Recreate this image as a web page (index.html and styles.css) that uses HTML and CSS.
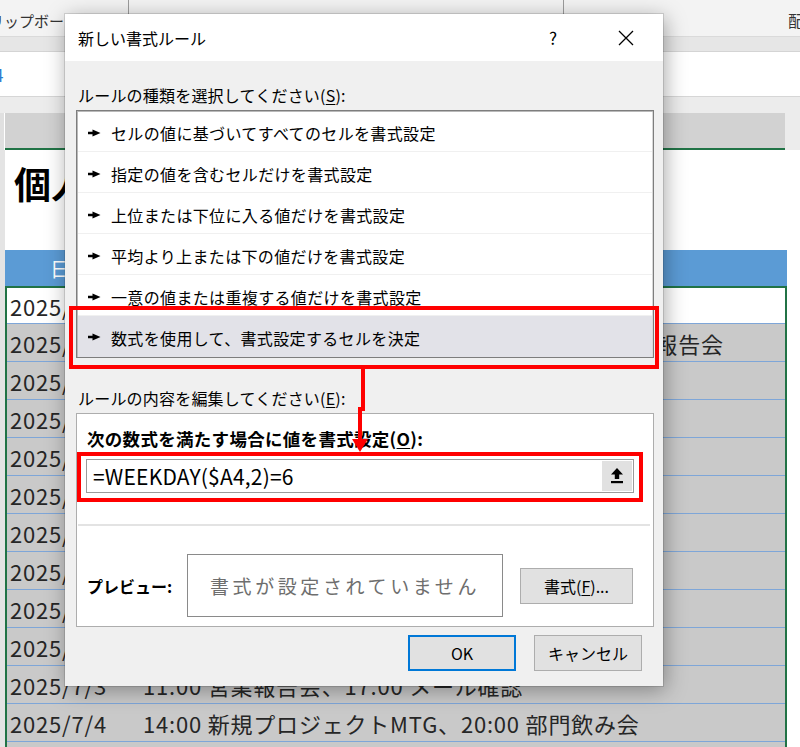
FILE: index.html
```html
<!DOCTYPE html>
<html lang="ja">
<head>
    <meta charset="UTF-8">
    <title>新しい書式ルール</title>
    <link rel="stylesheet" href="styles.css">
</head>
<body>
    <div class="sheet">
        <div class="ribbon">
            <span class="rb-left">リップボー</span>
            <span class="rb-right">配</span>
        </div>
        <div class="ribbon-band"></div>
        <div class="namebar"><span class="cellref">4</span></div>
        <div class="colhead">
            <div class="gutter"></div>
            <div class="colhead-cells"></div>
        </div>
        <div class="title-area">
            <h1>個人スケジュール</h1>
        </div>
        <div class="table">
            <div class="thead">
                <span class="c-date">日付</span>
                <span class="c-plan">予定</span>
            </div>
            <div class="rows">
                <div class="row first"><span class="c-date">2025/6/23</span><span class="c-plan">10:00 チーム定例</span></div>
                <div class="row"><span class="c-date">2025/6/24</span><span class="c-plan">10:00 定例会議、13:00 クライアント訪問、17:00 報告会</span></div>
                <div class="row"><span class="c-date">2025/6/25</span><span class="c-plan">09:30 朝会</span></div>
                <div class="row"><span class="c-date">2025/6/26</span><span class="c-plan">15:00 1on1</span></div>
                <div class="row"><span class="c-date">2025/6/27</span><span class="c-plan">19:00 ジム</span></div>
                <div class="row"><span class="c-date">2025/6/28</span><span class="c-plan">11:00 買い物</span></div>
                <div class="row"><span class="c-date">2025/6/29</span><span class="c-plan">終日 休み</span></div>
                <div class="row"><span class="c-date">2025/6/30</span><span class="c-plan">10:00 月初準備</span></div>
                <div class="row"><span class="c-date">2025/7/1</span><span class="c-plan">13:00 企画会議</span></div>
                <div class="row"><span class="c-date">2025/7/2</span><span class="c-plan">16:00 資料作成</span></div>
                <div class="row"><span class="c-date">2025/7/3</span><span class="c-plan">11:00 営業報告会、17:00 メール確認</span></div>
                <div class="row"><span class="c-date">2025/7/4</span><span class="c-plan">14:00 新規プロジェクトMTG、20:00 部門飲み会</span></div>
                <div class="row"><span class="c-date">2025/7/5</span><span class="c-plan">10:00 散歩</span></div>
            </div>
        </div>
    </div>

    <div class="dialog">
        <div class="titlebar">
            <span class="title">新しい書式ルール</span>
            <span class="help">?</span>
            <span class="close">
                <svg width="16" height="16" viewBox="0 0 16 16" fill="none" stroke="#000" stroke-width="1.3">
                    <path d="M1 1L15 15M15 1L1 15"/>
                </svg>
            </span>
        </div>
        <div class="dlg-body">
            <div class="dlg-label">ルールの種類を選択してください(<u>S</u>):</div>
            <ul class="rule-list">
                <li><svg class="marker" width="13" height="8" viewBox="0 0 13 8"><path d="M0 2.7H4.5V0.6L12.5 4L4.5 7.4V5.3H0Z" fill="#000"/></svg>セルの値に基づいてすべてのセルを書式設定</li>
                <li><svg class="marker" width="13" height="8" viewBox="0 0 13 8"><path d="M0 2.7H4.5V0.6L12.5 4L4.5 7.4V5.3H0Z" fill="#000"/></svg>指定の値を含むセルだけを書式設定</li>
                <li><svg class="marker" width="13" height="8" viewBox="0 0 13 8"><path d="M0 2.7H4.5V0.6L12.5 4L4.5 7.4V5.3H0Z" fill="#000"/></svg>上位または下位に入る値だけを書式設定</li>
                <li><svg class="marker" width="13" height="8" viewBox="0 0 13 8"><path d="M0 2.7H4.5V0.6L12.5 4L4.5 7.4V5.3H0Z" fill="#000"/></svg>平均より上または下の値だけを書式設定</li>
                <li><svg class="marker" width="13" height="8" viewBox="0 0 13 8"><path d="M0 2.7H4.5V0.6L12.5 4L4.5 7.4V5.3H0Z" fill="#000"/></svg>一意の値または重複する値だけを書式設定</li>
                <li class="selected"><svg class="marker" width="13" height="8" viewBox="0 0 13 8"><path d="M0 2.7H4.5V0.6L12.5 4L4.5 7.4V5.3H0Z" fill="#000"/></svg>数式を使用して、書式設定するセルを決定</li>
            </ul>
            <div class="dlg-label second">ルールの内容を編集してください(<u>E</u>):</div>
            <div class="edit-panel">
                <div class="panel-label">次の数式を満たす場合に値を書式設定(<u>O</u>):</div>
                <div class="formula-input">
                    <span class="formula">=WEEKDAY($A4,2)=6</span>
                    <span class="ref-btn">
                        <svg width="12" height="16" viewBox="0 0 12 16">
                            <path d="M6 0L12 6.5H8.2V11H3.8V6.5H0Z" fill="#000"/>
                            <rect x="0" y="13" width="12" height="2.2" fill="#000"/>
                        </svg>
                    </span>
                </div>
                <div class="panel-sep"></div>
                <div class="preview-row">
                    <span class="preview-label">プレビュー:</span>
                    <div class="preview-box">書式が設定されていません</div>
                    <span class="btn fmt-btn">書式(<u>F</u>)...</span>
                </div>
            </div>
            <div class="dlg-buttons">
                <span class="btn ok">OK</span>
                <span class="btn">キャンセル</span>
            </div>
        </div>

        <!-- 注釈（赤枠と矢印） -->
        <div class="mark mark-list"></div>
        <div class="mark mark-formula"></div>
        <svg class="mark-arrow" width="20" height="90" viewBox="0 0 20 90">
            <path d="M12 0V41H9V74" fill="none" stroke="#f00" stroke-width="4"/>
            <path d="M1 71H17L9 84Z" fill="#f00"/>
        </svg>
    </div>
</body>
</html>
```

FILE: styles.css
```css
* {
    margin: 0;
    padding: 0;
    box-sizing: border-box;
}

body {
    width: 800px;
    height: 747px;
    overflow: hidden;
    position: relative;
    background: #fff;
    font-family: "Noto Sans CJK JP", "Noto Sans", sans-serif;
    font-size: 16px;
    color: #000;
}

/* 背景のシート */
.sheet {
    width: 800px;
}

.ribbon {
    height: 36px;
    display: flex;
    justify-content: space-between;
    align-items: center;
    padding-top: 4px;
    background:
        linear-gradient(#9c9c9c, #9c9c9c) 128px 0 / 1px 15px no-repeat,
        linear-gradient(#9c9c9c, #9c9c9c) 563px 0 / 1px 15px no-repeat,
        #f3f3f3;
    color: #333;
    white-space: nowrap;
    overflow: hidden;
}

.rb-left {
    font-size: 15px;
    margin-left: -11px;
}

.rb-right {
    font-size: 16px;
    margin-right: -4px;
}

.ribbon-band {
    height: 16px;
    background: #e6e6e6;
    border-top: 1px solid #dadada;
    border-bottom: 1px solid #d4d4d4;
}

.namebar {
    height: 45px;
    background: #fff;
    border-bottom: 1px solid #d6d6d6;
    display: flex;
    align-items: center;
    overflow: hidden;
}

.cellref {
    color: #2b7bd0;
    font-size: 17px;
    margin-left: -6px;
}

.colhead {
    height: 53px;
    display: flex;
    align-items: flex-end;
    background: #ececec;
    padding-top: 16px;
}

.colhead .gutter {
    width: 5px;
    height: 37px;
    background: #e0e0e0;
    border-right: 1px solid #fff;
}

.colhead-cells {
    width: 780px;
    height: 37px;
    background: #d2d2d2;
    border-bottom: 2px solid #217346;
}

.title-area {
    height: 100px;
    padding: 11px 0 0 14px;
    background:
        linear-gradient(#e4e4e4, #e4e4e4) 0 0 / 5px 100% no-repeat,
        #fff;
}

.title-area h1 {
    font-size: 37px;
    line-height: 44px;
    font-weight: 700;
    white-space: nowrap;
}

.table {
    width: 787px;
    padding-left: 5px;
    background: linear-gradient(#e4e4e4, #e4e4e4) 0 0 / 5px 100% no-repeat;
}

.thead {
    height: 36px;
    background: #5b9bd5;
    color: #fff;
    display: flex;
    align-items: center;
    font-size: 20px;
}

.thead .c-date {
    width: 131px;
    padding-left: 45px;
}

.rows {
    border: 2px solid #217346;
    border-bottom: none;
}

.row {
    height: 38px;
    display: flex;
    align-items: center;
    background: #c9c9c9;
    border-bottom: 1px solid #7ea6d8;
    font-size: 22px;
    color: #262626;
    white-space: nowrap;
}

.row.first {
    background: #fff;
    height: 36px;
}

.c-date {
    width: 136px;
    padding-left: 3px;
    letter-spacing: 0.8px;
}

.c-plan {
    letter-spacing: 0.8px;
}

/* ダイアログ */
.dialog {
    position: absolute;
    left: 65px;
    top: 14px;
    width: 598px;
    height: 672px;
    background: #f0f0f0;
    box-shadow: 0 0 0 1px rgba(0, 0, 0, 0.12), 2px 4px 20px rgba(0, 0, 0, 0.35);
}

.titlebar {
    height: 47px;
    background: #fff;
    display: flex;
    align-items: center;
    padding-left: 13px;
    padding-right: 14px;
}

.title {
    flex: 1;
    font-size: 16px;
}

.help {
    width: 46px;
    text-align: center;
    font-size: 17px;
    margin-right: 27px;
}

.close {
    width: 46px;
    display: flex;
    justify-content: center;
}

.dlg-body {
    padding: 0 9px 0 11px;
}

.dlg-label {
    padding: 24px 0 0 2px;
    line-height: 20px;
    margin-bottom: 5px;
    letter-spacing: 0.2px;
}

.dlg-label.second {
    padding-top: 30px;
}

u {
    text-underline-offset: 2px;
}

.rule-list {
    list-style: none;
    height: 248px;
    background: #fff;
    border: 1px solid #7d7d7d;
    box-shadow: inset 1px 1px 0 #b9b9b9, inset -1px -1px 0 #d8d8d8;
    padding: 0 1px;
}

.rule-list li {
    height: 41px;
    display: flex;
    align-items: center;
    gap: 10px;
    padding: 4px 0 0 10px;
    border-bottom: 1px solid #f0f0f0;
    white-space: nowrap;
    letter-spacing: 0.35px;
}

.rule-list li:last-child {
    border-bottom: none;
    padding-top: 2px;
}

.rule-list li.selected {
    background: #e2e2e8;
}

.marker {
    flex-shrink: 0;
    margin-top: -1px;
}

.edit-panel {
    height: 214px;
    background: #fff;
    border: 1px solid #adadad;
}

.panel-label {
    padding: 15px 0 0 10px;
    line-height: 20px;
    font-size: 17.5px;
    font-weight: 700;
    letter-spacing: 0.3px;
}

.formula-input {
    height: 34px;
    margin: 10px 19px 0 9px;
    border: 1px solid #9b9b9b;
    display: flex;
    align-items: center;
    justify-content: space-between;
    padding-left: 6px;
}

.formula {
    font-size: 21px;
    letter-spacing: 0.2px;
}

.ref-btn {
    width: 30px;
    height: 30px;
    margin-right: 1px;
    background: #e1e1e1;
    display: flex;
    align-items: center;
    justify-content: center;
}

.panel-sep {
    height: 2px;
    margin: 31px 3px 0 1px;
    background: #e3e3e3;
}

.preview-row {
    display: flex;
    align-items: center;
    margin-top: 28px;
}

.preview-label {
    width: 110px;
    padding-left: 10px;
    font-weight: 700;
}

.preview-box {
    width: 316px;
    height: 63px;
    border: 1px solid #8a8a8a;
    background: #fff;
    display: flex;
    align-items: center;
    justify-content: center;
    font-size: 19px;
    letter-spacing: 3.6px;
    color: #6e6e6e;
}

.btn {
    width: 108px;
    height: 36px;
    background: #e1e1e1;
    border: 1px solid #adadad;
    display: flex;
    align-items: center;
    justify-content: center;
}

.fmt-btn {
    width: 113px;
    margin-left: 17px;
}

.dlg-buttons {
    display: flex;
    justify-content: flex-end;
    gap: 18px;
    margin: 8px 12px 0 0;
}

.btn.ok {
    border: 2px solid #0078d7;
}

/* 注釈 */
.mark {
    position: absolute;
    border: 4px solid #f00;
}

.mark-list {
    left: 4px;
    top: 292px;
    width: 590px;
    height: 63px;
}

.mark-formula {
    left: 12px;
    top: 438px;
    width: 566px;
    height: 50px;
}

.mark-arrow {
    position: absolute;
    left: 286px;
    top: 354px;
}
```
